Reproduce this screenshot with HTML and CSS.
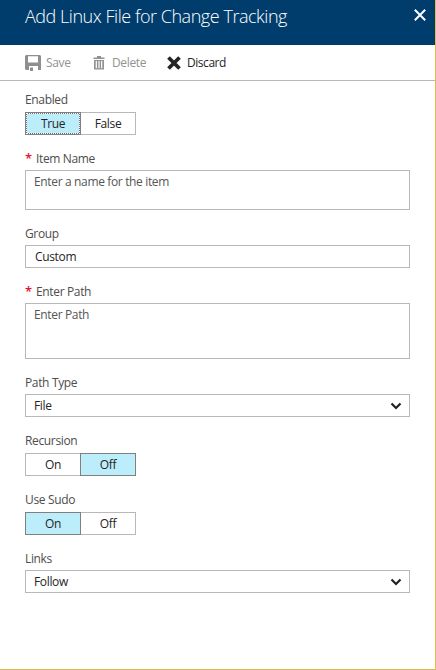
FILE: index.html
```html
<!DOCTYPE html>
<html lang="en">
<head>
<meta charset="utf-8">
<title>Add Linux File for Change Tracking</title>
<link rel="stylesheet" href="styles.css">
</head>
<body>
<main class="blade">
  <header class="header">
    <h1 class="title">Add Linux File for Change Tracking</h1>
    <svg class="close" width="12" height="12" viewBox="0 0 12 12"><path d="M.8.8l10.400 10.400M11.200.8L.8 11.200" stroke="#fff" stroke-width="2" fill="none"/></svg>
  </header>
  <nav class="toolbar">
    <span class="command command-save disabled"><svg width="16" height="16" viewBox="0 0 16 16"><path fill="#8f8f8f" fill-rule="evenodd" d="M1 0h14l1 1v14h-3v-4H4v4H1l-1-1V1zM3 1.200v6.300h10V1.200zM5 12.500h3V16H5z"/></svg><span>Save</span></span>
    <span class="command command-delete disabled"><svg width="12" height="14" viewBox="0 0 12 14"><path fill="#929292" fill-rule="evenodd" d="M4 0h4v1.500h3.500V3H.5V1.500H4zM1 4h10v9.500H1zM2.700 5v7.300h1.200V5zM5.400 5v7.300h1.200V5zM8.100 5v7.300h1.200V5z"/></svg><span>Delete</span></span>
    <span class="command command-discard"><svg width="14" height="14" viewBox="0 0 14 14"><path d="M1.500 1.500l11 11M12.500 1.500l-11 11" stroke="#252525" stroke-width="3.800" fill="none"/></svg><span>Discard</span></span>
  </nav>
  <form class="form">
    <div class="field">
      <div class="label">Enabled</div>
      <div class="toggle"><span class="option selected focused">True</span><span class="option">False</span></div>
    </div>
    <div class="field">
      <div class="label"><span class="required">*</span>Item Name</div>
      <div class="box box-name placeholder">Enter a name for the item</div>
    </div>
    <div class="field">
      <div class="label">Group</div>
      <div class="box box-custom">Custom</div>
    </div>
    <div class="field">
      <div class="label"><span class="required">*</span>Enter Path</div>
      <div class="box box-path placeholder">Enter Path</div>
    </div>
    <div class="field">
      <div class="label">Path Type</div>
      <div class="box select"><span>File</span><svg width="12" height="8" viewBox="0 0 12 8"><path d="M1.500 1.500L6 6l4.500-4.500" stroke="#222" stroke-width="2.200" fill="none"/></svg></div>
    </div>
    <div class="field">
      <div class="label">Recursion</div>
      <div class="toggle"><span class="option">On</span><span class="option selected">Off</span></div>
    </div>
    <div class="field">
      <div class="label">Use Sudo</div>
      <div class="toggle"><span class="option selected">On</span><span class="option">Off</span></div>
    </div>
    <div class="field">
      <div class="label">Links</div>
      <div class="box select"><span>Follow</span><svg width="12" height="8" viewBox="0 0 12 8"><path d="M1.500 1.500L6 6l4.500-4.500" stroke="#222" stroke-width="2.200" fill="none"/></svg></div>
    </div>
  </form>
</main>
</body>
</html>
```

FILE: styles.css
```css
* { box-sizing: border-box; }
body {
  margin: 0;
  font: 12px/18px "Open Sans", "Noto Sans", sans-serif;
  letter-spacing: -0.35px;
  color: #252525;
  background: #fff;
}
svg { display: block; flex: none; }
.blade {
  width: 436px;
  height: 670px;
  border-right: 1px solid #e6b850;
  border-bottom: 1px solid #e6b850;
}
.header {
  display: flex;
  justify-content: space-between;
  align-items: flex-start;
  height: 45px;
  padding: 4px 9px 0 25px;
  background: #003d6d;
  color: #fff;
}
.title {
  margin: 0;
  font-size: 18px;
  line-height: 24px;
  font-weight: 300;
  letter-spacing: -0.46px;
  white-space: nowrap;
}
.close { margin-top: 5px; }
.toolbar {
  display: flex;
  align-items: center;
  height: 36px;
  padding-left: 25px;
  border-bottom: 1px solid #b8b8b8;
}
.command { display: flex; align-items: center; }
.command-save { width: 68px; gap: 5px; }
.command-delete { width: 74px; gap: 7px; }
.command-discard { gap: 6px; letter-spacing: -0.45px; }
.disabled { color: #929292; }
.form { padding: 9px 25px 0; }
.field { margin-bottom: 14px; }
.label {
  height: 18px;
  margin-bottom: 3px;
  padding-top: 1px;
  color: #4d4d4d;
  white-space: nowrap;
}
.required {
  display: inline-block;
  width: 11px;
  color: #e8112d;
  font-size: 13px;
  font-weight: 600;
  line-height: 14px;
}
.box {
  height: 23px;
  padding: 2px 8px;
  line-height: 18px;
  border: 1px solid #b8b8b8;
}
.box-name { height: 40px; }
.box-path { height: 56px; }
.box-custom { padding-left: 9px; line-height: 17px; }
.placeholder { color: #555; }
.select {
  display: flex;
  justify-content: space-between;
  align-items: center;
  padding-right: 7px;
}
.toggle { display: flex; margin-top: 4px; }
.option {
  width: 56px;
  height: 23px;
  line-height: 21px;
  text-align: center;
  border: 1px solid #b8b8b8;
}
.option + .option { margin-left: -1px; }
.selected { position: relative; background: #bcedfa; border-color: #808080; }
.focused {
  box-shadow: inset 0 0 0 1px #707070;
  outline: 1px dotted #fff;
  outline-offset: -2px;
}
```
